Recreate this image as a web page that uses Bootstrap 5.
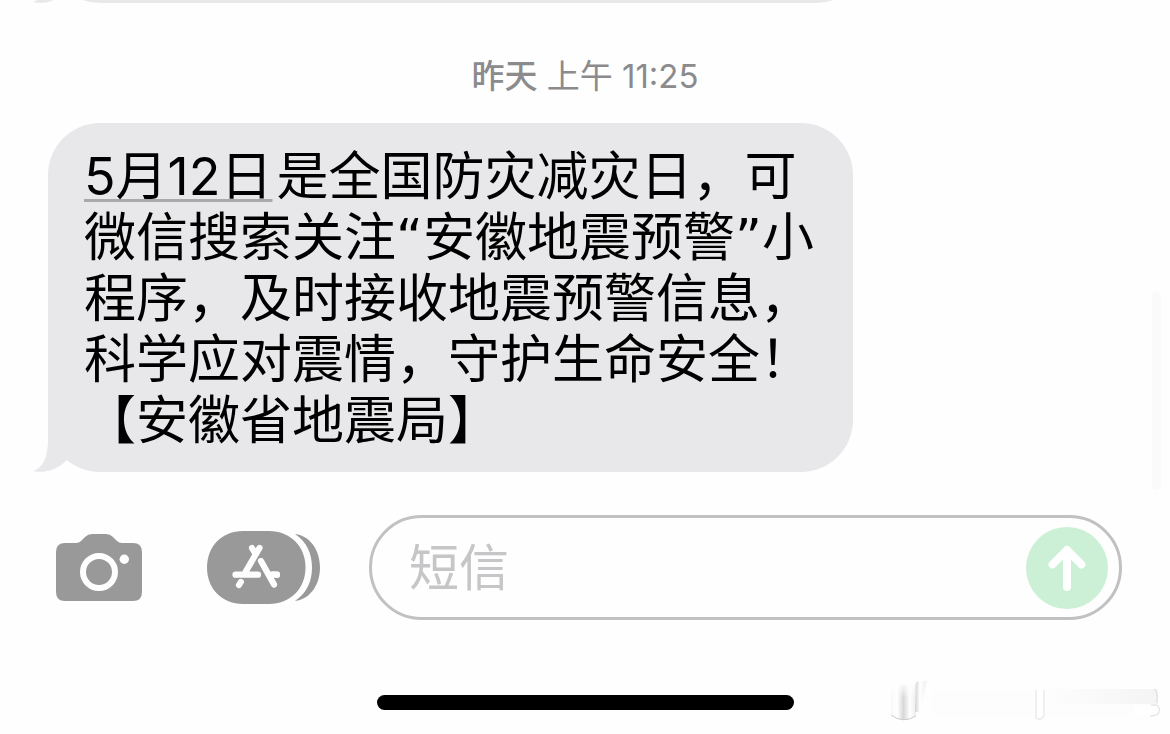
<!DOCTYPE html>
<html lang="zh-CN">
<head>
<meta charset="utf-8">
<meta name="viewport" content="width=device-width, initial-scale=1">
<title>短信</title>
<link href="https://cdn.jsdelivr.net/npm/bootstrap@5.3.0/dist/css/bootstrap.min.css" rel="stylesheet">
<style>
  body { font-family: Inter, "Noto Sans CJK SC", sans-serif; background: #fefefe; color: #000; }
  .bubble { background: #e8e8ea; border-radius: 52px; padding: 23px 36px 21px; width: 805px; max-width: 100%; font-size: 52px; line-height: 61px; margin: 0; }
  .bubble-tail { position: absolute; left: -16px; bottom: 0; }
  .thread { padding: 0 48px; }
  .previous { height: 3px; overflow: hidden; margin: 0 -16px; padding: 0 16px; }
  .previous .bubble { height: 104px; width: 820px; }
  .stamp { color: #8b8b8d; font-size: 33px; line-height: 40px; padding: 53px 0 27px; }
  .stamp strong { font-weight: 500; }
  .quote { font-family: "DejaVu Sans", sans-serif; line-height: 1; }
  .date-link { color: #000; text-decoration: underline 3px #a9a9ab; text-underline-offset: 4px; text-decoration-skip-ink: none; }
  .composer { padding: 43px 48px 0 56px; }
  .icon-btn { color: #999; line-height: 0; }
  .field { height: 105px; border: 3px solid #c1c1c3; padding: 0 11px 0 37px; margin-left: 49px; }
  .field input { font-size: 50px; line-height: 60px; }
  .field input::placeholder { color: #c6c6c8; opacity: 1; }
  .send { width: 82px; height: 82px; background: #cbf0d6; }
  .apps { margin-left: 65px; }
  .home-bar { width: 417px; height: 15px; background: #000; }
  .home-row { padding-top: 75px; padding-bottom: 24px; }
  .scroll-mark { position: absolute; right: 9px; top: 292px; width: 9px; height: 198px; background: #fafafa; }
  .corner-mark { position: absolute; right: 0; bottom: 8px; }
</style>
</head>
<body>
<main class="position-relative d-flex flex-column min-vh-100 overflow-hidden">
  <section class="thread">
    <div class="previous d-flex align-items-end">
      <div class="bubble position-relative flex-shrink-0">
        <svg class="bubble-tail" width="60" height="54" viewBox="0 -22 60 54" aria-hidden="true"><path fill="#e8e8ea" d="M16-22V0C16 17 11 28 1 31C13 34 26 29 35 20L42 0V-22Z"/></svg>
      </div>
    </div>
    <div class="stamp text-center"><strong>昨天</strong> 上午 11:25</div>
    <div class="position-relative">
      <p class="bubble"><a class="date-link d-inline-block me-1" href="#">5月12日</a>是全国防灾减灾日，可<br class="d-none d-lg-inline">微信搜索关注<span class="quote">“</span>安徽地震预警<span class="quote">”</span>小<br class="d-none d-lg-inline">程序，及时接收地震预警信息，<br class="d-none d-lg-inline">科学应对震情，守护生命安全！<br class="d-none d-lg-inline">【安徽省地震局】</p>
      <svg class="bubble-tail" width="60" height="54" viewBox="0 -22 60 54" aria-hidden="true"><path fill="#e8e8ea" d="M16-22V0C16 17 11 28 1 31C13 34 26 29 35 20L42 0V-22Z"/></svg>
    </div>
  </section>

  <form class="composer d-flex align-items-center">
    <button type="button" class="btn icon-btn p-0 border-0" aria-label="相机">
      <svg width="86" height="68" viewBox="0 0 86 68">
        <path fill="currentColor" d="M9 9H20Q23 9 25 7L29 3Q32 0 36 0H50Q54 0 57 3L61 7Q63 9 66 9H77Q86 9 86 18V58Q86 67 77 67H9Q0 67 0 58V18Q0 9 9 9Z"/>
        <circle cx="43" cy="38" r="16" fill="none" stroke="#fefefe" stroke-width="6"/>
        <circle cx="68.3" cy="25.3" r="4.7" fill="#fefefe"/>
      </svg>
    </button>
    <button type="button" class="btn icon-btn apps p-0 border-0" aria-label="应用">
      <svg width="113" height="73" viewBox="0 0 113 73">
        <path fill="currentColor" d="M36 0H62C83 0 98.500 15 98.500 36.500S83 73 62 73H36C15 73 0 58 0 36.500S15 0 36 0Z"/>
        <path fill="currentColor" d="M88 3C104 5 113 20 113 36.500S104 68 88 70C100 62 105 50 105 36.500S100 11 88 3Z"/>
        <g fill="none" stroke="#fefefe" stroke-width="6.200" stroke-linecap="round">
          <path d="M45 17L48.500 23M52.500 17L38.500 41M28.500 43.700H51M62 43.700H70M33.800 51L32 54"/>
          <path d="M54 30L67 53.500" stroke="#999" stroke-width="9"/>
          <path d="M54 30L67 53.500M64 43.700H70"/>
        </g>
      </svg>
    </button>
    <div class="field d-flex align-items-center flex-grow-1 rounded-pill">
      <input type="text" class="form-control border-0 shadow-none bg-transparent p-0" placeholder="短信" aria-label="短信">
      <button type="button" class="send btn rounded-circle border-0 p-0 flex-shrink-0" aria-label="发送">
        <svg class="d-block" width="82" height="82" viewBox="0 0 82 82" fill="none" stroke="#fff" stroke-width="8" stroke-linecap="round" stroke-linejoin="round"><path d="M41 60V23M26.500 37.500L41 23L55.500 37.500"/></svg>
      </button>
    </div>
  </form>

  <div class="home-row d-flex justify-content-center mt-auto"><div class="home-bar rounded-pill"></div></div>

  <div class="scroll-mark rounded-pill"></div>
  <svg class="corner-mark" width="286" height="48" viewBox="0 0 286 48" aria-hidden="true">
    <defs>
      <linearGradient id="cup"><stop offset="0" stop-color="#f8f8f8"/><stop offset=".25" stop-color="#fff"/><stop offset=".5" stop-color="#d8d8d8"/><stop offset=".75" stop-color="#fff"/><stop offset="1" stop-color="#ececec"/></linearGradient>
      <linearGradient id="edge"><stop offset="0" stop-color="#d0d0d0"/><stop offset=".4" stop-color="#fff"/><stop offset="1" stop-color="#efefef"/></linearGradient>
      <linearGradient id="band"><stop offset="0" stop-color="#fdfdfd"/><stop offset="1" stop-color="#f4f4f4"/></linearGradient>
      <linearGradient id="fade" x2="0" y2="1"><stop offset="0" stop-color="#fefefe"/><stop offset="1" stop-color="#fefefe" stop-opacity="0"/></linearGradient>
    </defs>
    <rect x="48" y="12" width="225" height="26" fill="#fdfdfd"/>
    <path d="M7 6H32V38Q20 46 7 38Z" fill="url(#cup)"/>
    <rect x="5" y="4" width="26" height="16" fill="url(#fade)"/>
    <path d="M7 37Q19 46 32 38" fill="none" stroke="#ccc"/>
    <path d="M32 5Q32 3 36 3H43L36 34H31Z" fill="url(#edge)"/>
    <path d="M152 12V40Q157 43 160 38V12" fill="#fff" stroke="#f0f0f0" stroke-width="2"/>
    <rect x="170" y="11" width="104" height="15" fill="url(#band)"/>
    <path d="M250 27H272Q276 32 272 37H250" fill="#fff"/>
    <path d="M270 11Q274 12 273 25M267 27H273Q277 31 274 36Q271 38 266 38" fill="none" stroke="#dcdcdc"/>
  </svg>
</main>
<script src="https://cdn.jsdelivr.net/npm/bootstrap@5.3.0/dist/js/bootstrap.bundle.min.js"></script>
</body>
</html>
